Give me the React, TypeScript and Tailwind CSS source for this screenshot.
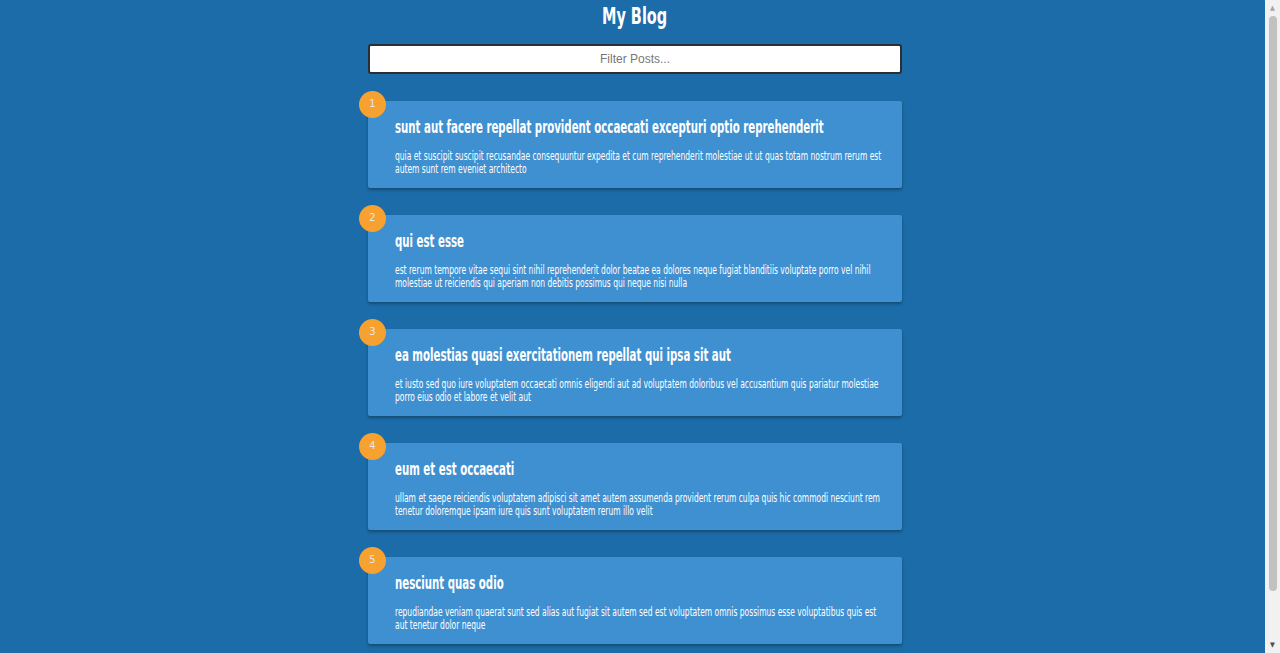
const posts = [
  {
    id: 1,
    title: "sunt aut facere repellat provident occaecati excepturi optio reprehenderit",
    body: "quia et suscipit suscipit recusandae consequuntur expedita et cum reprehenderit molestiae ut ut quas totam nostrum rerum est autem sunt rem eveniet architecto",
  },
  {
    id: 2,
    title: "qui est esse",
    body: "est rerum tempore vitae sequi sint nihil reprehenderit dolor beatae ea dolores neque fugiat blanditiis voluptate porro vel nihil molestiae ut reiciendis qui aperiam non debitis possimus qui neque nisi nulla",
  },
  {
    id: 3,
    title: "ea molestias quasi exercitationem repellat qui ipsa sit aut",
    body: "et iusto sed quo iure voluptatem occaecati omnis eligendi aut ad voluptatem doloribus vel accusantium quis pariatur molestiae porro eius odio et labore et velit aut",
  },
  {
    id: 4,
    title: "eum et est occaecati",
    body: "ullam et saepe reiciendis voluptatem adipisci sit amet autem assumenda provident rerum culpa quis hic commodi nesciunt rem tenetur doloremque ipsam iure quis sunt voluptatem rerum illo velit",
  },
  {
    id: 5,
    title: "nesciunt quas odio",
    body: "repudiandae veniam quaerat sunt sed alias aut fugiat sit autem sed est voluptatem omnis possimus esse voluptatibus quis est aut tenetur dolor neque",
  },
];

// no Oswald offline: condensed DejaVu squeezed horizontally to get the same look
const narrow = "font-['DejaVu_Sans_Condensed','DejaVu_Sans',sans-serif]";

export default function App() {
  return (
    <main className={`min-h-[730px] bg-[#1b6ca8] pr-[10px] text-white ${narrow}`}>
      <div className="mx-auto w-[534px] pb-20">
        <div className="flex justify-center pt-[1px]">
          <h1 className="origin-center scale-x-[0.7] whitespace-nowrap text-[23px] font-bold leading-[30px]">My Blog</h1>
        </div>
        <input
          type="text"
          placeholder="Filter Posts..."
          className="mt-[13px] block h-[30px] w-full rounded-[3px] border-2 border-[#2a2f36] bg-white text-center font-['Liberation_Sans',Arial,sans-serif] text-[12px] text-gray-700 placeholder:text-[#777] outline-none"
        />
        <div className="mt-[27px] flex flex-col gap-[27px]">
          {posts.map((p) => (
            <div key={p.id} className="relative rounded-[2px] bg-[#3f90d0] pb-[12px] pl-[27px] pr-[14px] pt-[14px] shadow-[0_2px_3px_rgba(0,0,0,0.3)]">
              <span className="absolute -left-[9px] -top-[10px] flex h-[27px] w-[27px] items-center justify-center rounded-full bg-[#f7a130] text-[11px] text-[#e6e6e6]">
                {p.id}
              </span>
              <h2 className="w-[783px] origin-left scale-x-[0.63] text-[18px] font-bold leading-[24px]">{p.title}</h2>
              <p className="mt-[11px] w-[704px] origin-left scale-x-[0.7] text-[12px] leading-[13px]">{p.body}</p>
            </div>
          ))}
        </div>
      </div>
      <div className="fixed right-0 top-0 flex h-full w-[15px] flex-col items-center bg-[#f1f1f1] py-[3px]">
        <span className="text-[7px] leading-[10px] text-[#a3a3a3]">▲</span>
        <div className="mt-[3px] h-[575px] w-[8px] rounded-full bg-[#c1c1c1]" />
        <span className="mt-auto text-[7px] leading-[10px] text-[#505050]">▼</span>
      </div>
    </main>
  );
}
